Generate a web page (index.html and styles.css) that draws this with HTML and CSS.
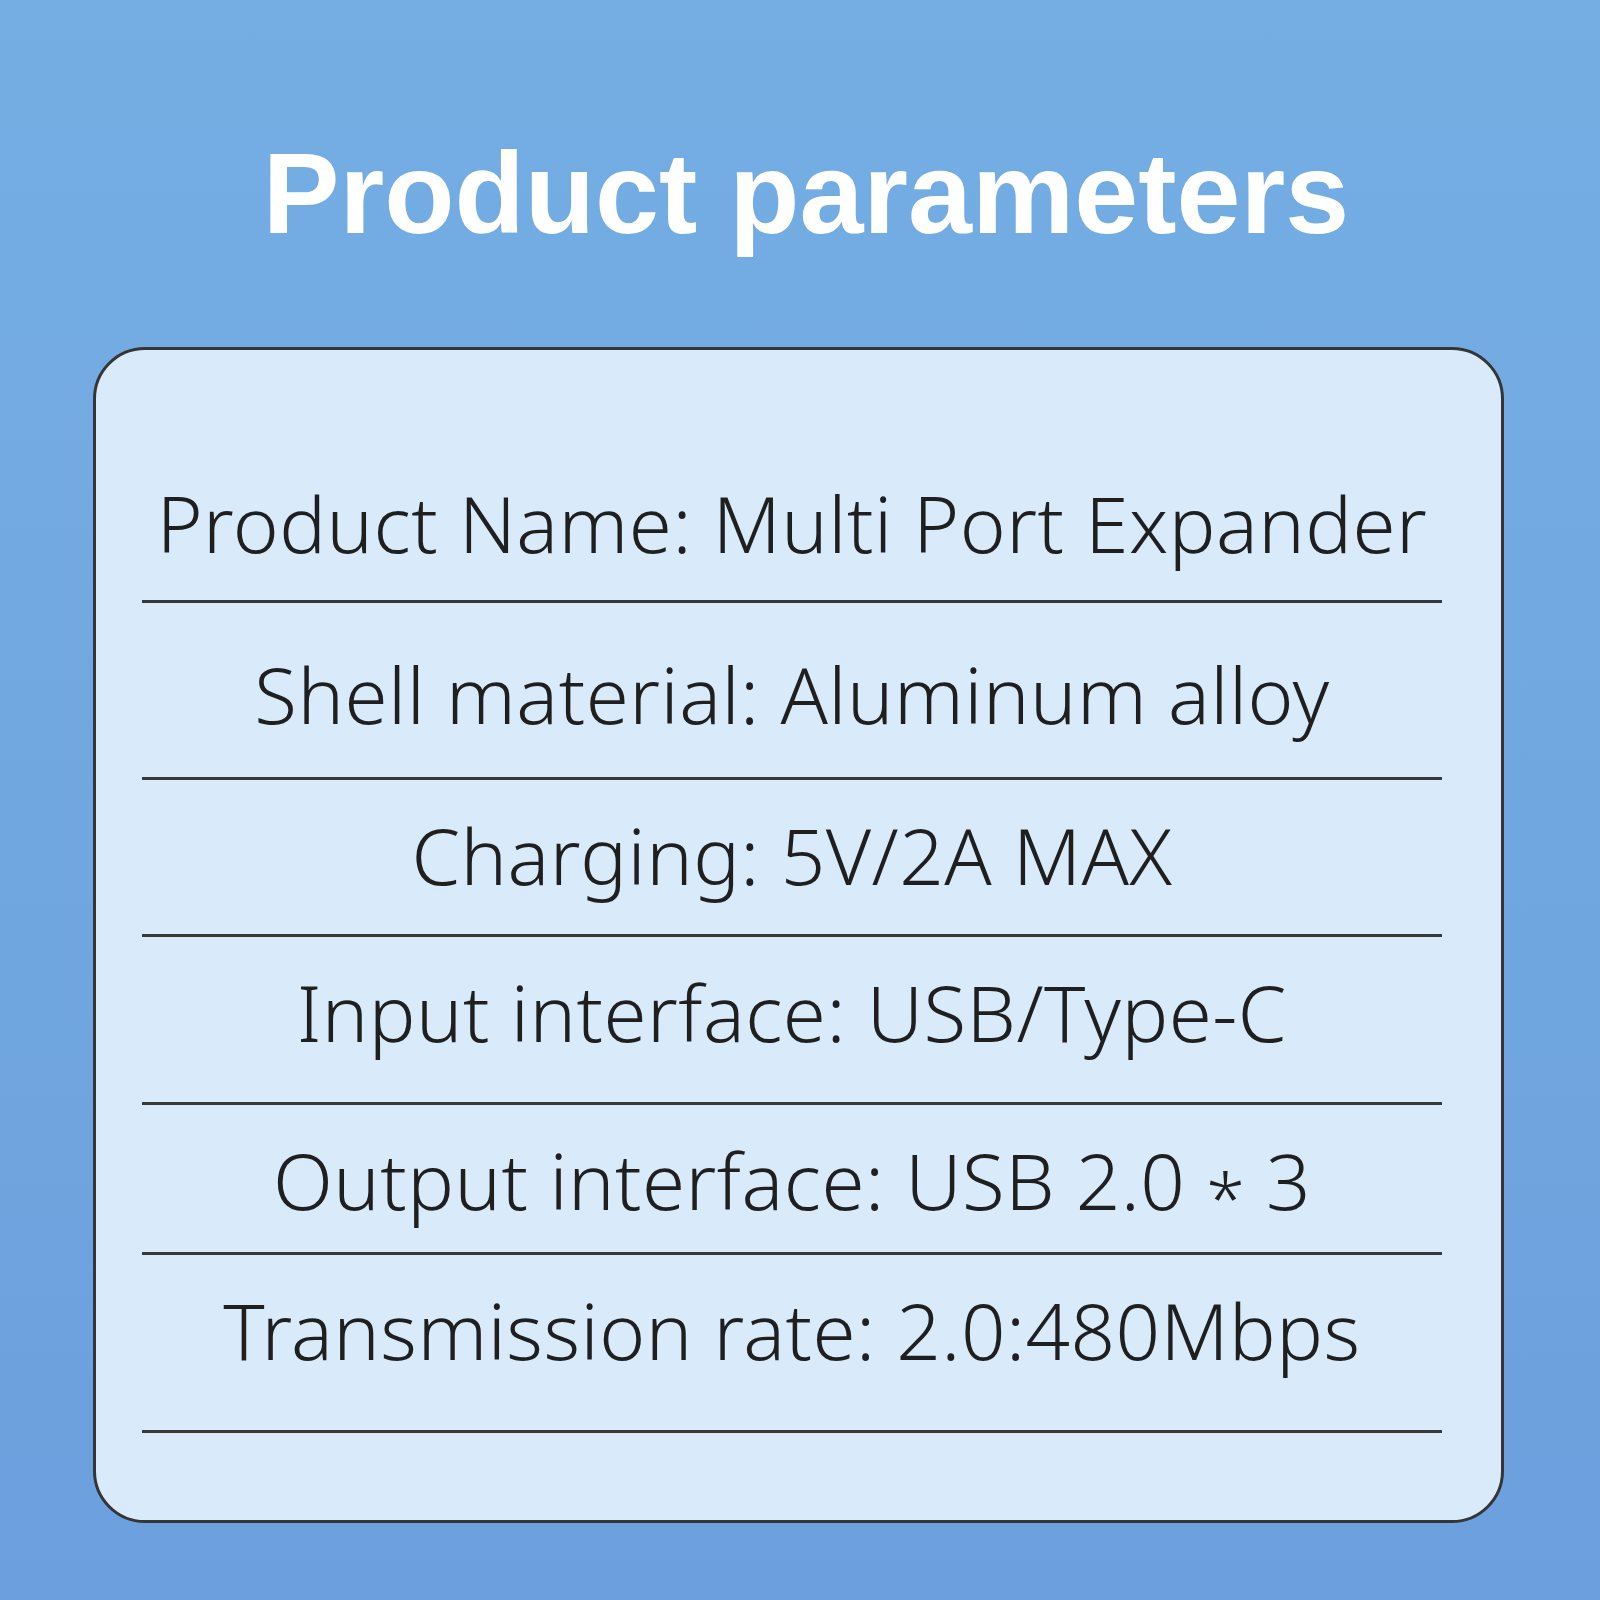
FILE: index.html
```html
<!DOCTYPE html>
<html lang="en">
<head>
    <meta charset="UTF-8">
    <meta name="viewport" content="width=device-width, initial-scale=1.0">
    <title>Product parameters</title>
    <link rel="stylesheet" href="styles.css">
</head>
<body>
    <h1 class="title">Product parameters</h1>
    <div class="card">
        <ul class="params">
            <li class="param">Product Name: Multi Port Expander</li>
            <li class="param">Shell material: Aluminum alloy</li>
            <li class="param">Charging: 5V/2A MAX</li>
            <li class="param">Input interface: USB/Type-C</li>
            <li class="param">Output interface: USB 2.0 <span class="mult">*</span> 3</li>
            <li class="param">Transmission rate: 2.0:480Mbps</li>
        </ul>
    </div>
</body>
</html>
```

FILE: styles.css
```css
html, body {
    margin: 0;
    padding: 0;
}
body {
    width: 1600px;
    height: 1600px;
    background: linear-gradient(180deg, #74aee3 0%, #70a6df 60%, #6c9fde 100%);
    padding-top: 136px;
    box-sizing: border-box;
    font-family: "Noto Sans", "Open Sans", sans-serif;
}
.title {
    margin: 0;
    font-family: "Liberation Sans", Arial, sans-serif;
    font-weight: bold;
    font-size: 115px;
    line-height: 115px;
    color: #fff;
    text-align: center;
    padding-left: 12px;
}
.card {
    width: 1411px;
    height: 1176px;
    margin: 96px 0 0 93px;
    box-sizing: border-box;
    border: 3px solid #353535;
    border-radius: 52px;
    background-color: #d9eafb;
    padding: 98px 59px 0 46px;
}
.params {
    list-style-type: none;
    margin: 0;
    padding: 0;
    display: grid;
    grid-template-rows: 155px 177px 157px 168px 150px 178px;
}
.param {
    padding-top: 36px;
    border-bottom: 3px solid #383838;
    box-sizing: border-box;
    font-size: 78px;
    font-weight: 350;
    line-height: 78px;
    letter-spacing: 0.5px;
    color: #1f1f1f;
    text-align: center;
    white-space: nowrap;
}
/* second row sits a little lower in the layout */
.param:nth-child(2) {
    padding-top: 52px;
}
.mult {
    font-size: 70px;
    vertical-align: -14px;
}
```
